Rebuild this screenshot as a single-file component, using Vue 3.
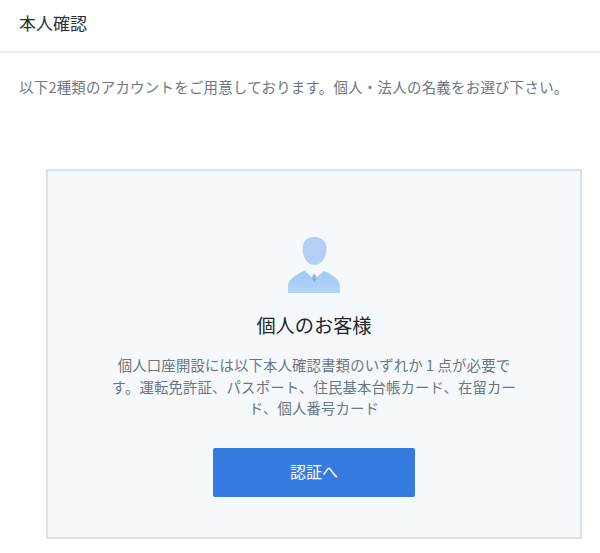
<template>
  <div class="page">
    <header class="head">本人確認</header>
    <p class="lead">以下2種類のアカウントをご用意しております。個人・法人の名義をお選び下さい。</p>
    <section class="card">
      <svg class="avatar" viewBox="0 0 52 56" width="52" height="56">
        <defs>
          <linearGradient id="bodyFill" x1="0" y1="0" x2="0" y2="1">
            <stop offset="0" stop-color="#a4c4f4" />
            <stop offset="1" stop-color="#b2d6fb" />
          </linearGradient>
        </defs>
        <path d="M26.5 0 C34 0 38.5 4.5 38.5 12 C38.5 20 33.5 28 26.5 28 C19.5 28 14.5 20 14.5 12 C14.5 4.5 19 0 26.5 0 Z" fill="#b6cdf5" />
        <path d="M0 56 L0 49 C1 42 6 38.5 18 33 L26 39 L34 33 C46 38.5 51 42 52 49 L52 56 Z" fill="url(#bodyFill)" />
        <path d="M18 31 L26.3 36 L34.5 31 L36 34 L29 40 L26.3 37.5 L23.5 40 L17 34 Z" fill="#f3f8fd" />
        <path d="M25 37.5 L27.6 37.5 L28.4 43 L26.3 46 L24.2 43 Z" fill="#8fb6ec" />
      </svg>
      <h2 class="title">個人のお客様</h2>
      <p class="desc">個人口座開設には以下本人確認書類のいずれか 1 点が必要で<br />す。運転免許証、パスポート、住民基本台帳カード、在留カー<br />ド、個人番号カード</p>
      <button type="button" class="btn">認証へ</button>
    </section>
  </div>
</template>

<script setup>
</script>

<style>
html, body { background: #fff; }
</style>

<style scoped>
.page {
  width: 600px;
  height: 553px;
  overflow: hidden;
  font-family: "Noto Sans CJK JP", "Noto Sans", sans-serif;
}
.head {
  height: 51px;
  padding-left: 19px;
  line-height: 46px;
  font-size: 17px;
  color: #2b2f33;
  border-bottom: 2px solid #eeeeee;
}
.lead {
  margin: 23px 0 0 19px;
  font-size: 14.4px;
  letter-spacing: .3px;
  line-height: 22px;
  color: #6b7682;
  white-space: nowrap;
}
.card {
  margin: 71px 0 0 46px;
  width: 536px;
  height: 370px;
  box-sizing: border-box;
  border: 2px solid #dce2e7;
  background: #f5f9fc;
  display: flex;
  flex-direction: column;
  align-items: center;
  padding-top: 66px;
}
.avatar { display: block; }
.title {
  margin: 18px 0 0;
  font-size: 19.2px;
  line-height: 28px;
  font-weight: 400;
  color: #22262a;
}
.desc {
  margin: 15px 0 0;
  font-size: 14.4px;
  letter-spacing: .13px;
  line-height: 21.6px;
  text-align: center;
  white-space: nowrap;
  color: #6b7682;
}
.btn {
  margin-top: 29px;
  width: 202px;
  height: 49px;
  border: 0;
  border-radius: 2px;
  background: #377ae0;
  color: #fff;
  font: inherit;
  font-size: 16px;
  line-height: 46px;
  padding: 0 0 2px;
}
</style>
